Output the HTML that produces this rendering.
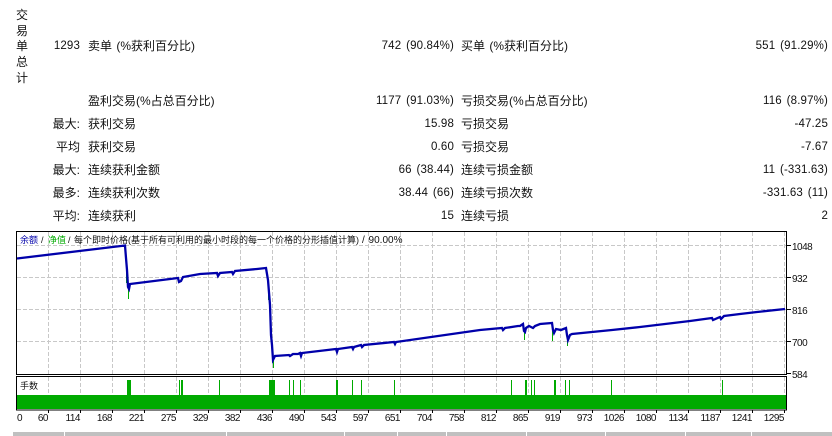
<!DOCTYPE html>
<html><head><meta charset="utf-8">
<style>
html,body{margin:0;padding:0;background:#fff;width:832px;height:436px;overflow:hidden}
body{position:relative;font:12px/16px "Liberation Sans","Noto Sans CJK SC",sans-serif;color:#111}
.t{position:absolute;white-space:nowrap;word-spacing:1px}
.r{text-align:right;font-size:11.5px;letter-spacing:.15px;word-spacing:1.5px}
.k{font-size:12px;letter-spacing:0;word-spacing:0}
svg{position:absolute;left:0;top:0}
svg text{font-family:"Liberation Sans","Noto Sans CJK SC",sans-serif;fill:#111}
.a{font-size:10px;letter-spacing:-.5px}
.b{position:absolute;top:432px;height:4px;background:#c0c0c0}
</style></head><body>
<div class="t" style="left:16px;top:7px">交</div>
<div class="t" style="left:16px;top:23px">易</div>
<div class="t" style="left:16px;top:38px">单</div>
<div class="t" style="left:16px;top:54px">总</div>
<div class="t" style="left:16px;top:70px">计</div>

<div class="t r" style="right:752px;top:38px">1293</div>
<div class="t" style="left:88px;top:38px">卖单 (%获利百分比)</div>
<div class="t r" style="right:378px;top:38px">742 (90.84%)</div>
<div class="t" style="left:461px;top:38px">买单 (%获利百分比)</div>
<div class="t r" style="right:4px;top:38px">551 (91.29%)</div>

<div class="t" style="left:88px;top:93px">盈利交易(%占总百分比)</div>
<div class="t r" style="right:378px;top:93px">1177 (91.03%)</div>
<div class="t" style="left:461px;top:93px">亏损交易(%占总百分比)</div>
<div class="t r" style="right:4px;top:93px">116 (8.97%)</div>

<div class="t r k" style="right:752px;top:116px">最大:</div>
<div class="t" style="left:88px;top:116px">获利交易</div>
<div class="t r" style="right:378px;top:116px">15.98</div>
<div class="t" style="left:461px;top:116px">亏损交易</div>
<div class="t r" style="right:4px;top:116px">-47.25</div>

<div class="t r k" style="right:752px;top:139px">平均</div>
<div class="t" style="left:88px;top:139px">获利交易</div>
<div class="t r" style="right:378px;top:139px">0.60</div>
<div class="t" style="left:461px;top:139px">亏损交易</div>
<div class="t r" style="right:4px;top:139px">-7.67</div>

<div class="t r k" style="right:752px;top:162px">最大:</div>
<div class="t" style="left:88px;top:162px">连续获利金额</div>
<div class="t r" style="right:378px;top:162px">66 (38.44)</div>
<div class="t" style="left:461px;top:162px">连续亏损金额</div>
<div class="t r" style="right:4px;top:162px">11 (-331.63)</div>

<div class="t r k" style="right:752px;top:185px">最多:</div>
<div class="t" style="left:88px;top:185px">连续获利次数</div>
<div class="t r" style="right:378px;top:185px">38.44 (66)</div>
<div class="t" style="left:461px;top:185px">连续亏损次数</div>
<div class="t r" style="right:4px;top:185px">-331.63 (11)</div>

<div class="t r k" style="right:752px;top:208px">平均:</div>
<div class="t" style="left:88px;top:208px">连续获利</div>
<div class="t r" style="right:378px;top:208px">15</div>
<div class="t" style="left:461px;top:208px">连续亏损</div>
<div class="t r" style="right:4px;top:208px">2</div>

<svg width="832" height="436" viewBox="0 0 832 436" shape-rendering="crispEdges">
<g stroke="#c8c8c8" stroke-dasharray="4 2" fill="none">
<path d="M17 245.5H787M17 277.5H787M17 309.5H787M17 341.5H787"/>
<path d="M48.5 232V374M80.5 232V374M112.5 232V374M144.5 232V374M176.5 232V374M208.5 232V374M240.5 232V374M272.5 232V374M304.5 232V374M336.5 232V374M368.5 232V374M400.5 232V374M432.5 232V374M464.5 232V374M496.5 232V374M528.5 232V374M560.5 232V374M592.5 232V374M624.5 232V374M656.5 232V374M688.5 232V374M720.5 232V374M752.5 232V374M784.5 232V374"/>
<path d="M48.5 377V395M80.5 377V395M112.5 377V395M144.5 377V395M176.5 377V395M208.5 377V395M240.5 377V395M272.5 377V395M304.5 377V395M336.5 377V395M368.5 377V395M400.5 377V395M432.5 377V395M464.5 377V395M496.5 377V395M528.5 377V395M560.5 377V395M592.5 377V395M624.5 377V395M656.5 377V395M688.5 377V395M720.5 377V395M752.5 377V395M784.5 377V395"/>
</g>
<g fill="#00aa00">
<rect x="17" y="395" width="769" height="14"/>
<rect x="127" y="380" width="4" height="15"/><rect x="179" y="380" width="1" height="15"/><rect x="181" y="380" width="2" height="15"/><rect x="219" y="380" width="1" height="15"/><rect x="269" y="380" width="6" height="15"/><rect x="289" y="380" width="1" height="15"/><rect x="293" y="380" width="1" height="15"/><rect x="300" y="380" width="1" height="15"/><rect x="336" y="380" width="2" height="15"/><rect x="352" y="380" width="1" height="15"/><rect x="361" y="380" width="1" height="15"/><rect x="394" y="380" width="1" height="15"/><rect x="511" y="380" width="1" height="15"/><rect x="525" y="380" width="2" height="15"/><rect x="531" y="380" width="1" height="15"/><rect x="534" y="380" width="1" height="15"/><rect x="554" y="380" width="2" height="15"/><rect x="565" y="380" width="1" height="15"/><rect x="569" y="380" width="1" height="15"/><rect x="611" y="380" width="1" height="15"/><rect x="722" y="380" width="1" height="15"/>
<rect x="126" y="271" width="1" height="12"/><rect x="128" y="285" width="1" height="14"/><rect x="268" y="291" width="2" height="9"/><rect x="273" y="358" width="1" height="10"/><rect x="524" y="331" width="1" height="9"/><rect x="552" y="331" width="1" height="10"/><rect x="567" y="340" width="1" height="6"/>
</g>
<g shape-rendering="auto">
<polyline fill="none" stroke="#0000aa" stroke-width="2.3" stroke-linejoin="miter" points="17,258.5 125,245.5 126,258 127,270 128,287 129,289 130,284 178,278 179,282 181,281 183,277 200,274 217,273 218,276 220,273 232,272 233,274 235,271 257,269 266,268 268,280 270,305 271,335 272,345 273,360 275,356 289,355 290,356 293,354 298,354 300,353 301,356 302,353 336,349 337,352 338,349 352,347 353,349 354,347 361,345 362,347 364,345 394,342 395,344 396,342 480,330 502,328 503,330 505,328 518,326 520,326 523,324 524,331 525,332 526,328 529,326 531,327 533,328 535,326 540,324 552,323 553,330 554,333 556,329 561,330 566,328 567,335 568,340 570,335 572,334 612,330 640,327 690,321 712,318 713,320 720,317 721,319 724,316 740,314 757,312 785,309"/>
</g>
<g fill="none" stroke="#000">
<rect x="16.5" y="231.5" width="770" height="143"/>
<rect x="16.5" y="376.5" width="770" height="33.5"/>
<path d="M787 245.5H791M787 277.5H791M787 309.5H791M787 341.5H791M787 373.5H791"/>
<path d="M48.5 410V413M80.5 410V413M112.5 410V413M144.5 410V413M176.5 410V413M208.5 410V413M240.5 410V413M272.5 410V413M304.5 410V413M336.5 410V413M368.5 410V413M400.5 410V413M432.5 410V413M464.5 410V413M496.5 410V413M528.5 410V413M560.5 410V413M592.5 410V413M624.5 410V413M656.5 410V413M688.5 410V413M720.5 410V413M752.5 410V413M784.5 410V413"/>
</g>
<g font-size="9">
<text x="20" y="243" style="fill:#0000aa">余额</text>
<text x="41" y="243">/</text>
<text x="48" y="243" style="fill:#00aa00">净值</text>
<text x="68" y="243">/</text>
<text x="74" y="243">每个即时价格(基于所有可利用的最小时段的每一个价格的分形插值计算)</text>
<text x="362" y="243" style="font-size:10px;word-spacing:1px">/ 90.00%</text>
<text x="20" y="389">手数</text>
</g>
<g class="a">
<text x="792" y="250">1048</text><text x="792" y="282">932</text><text x="792" y="314">816</text><text x="792" y="346">700</text><text x="792" y="378">584</text>
</g>
<g class="a" text-anchor="end">
<text x="22" y="421">0</text><text x="48" y="421">60</text><text x="80" y="421">114</text><text x="112" y="421">168</text><text x="144" y="421">221</text><text x="176" y="421">275</text><text x="208" y="421">329</text><text x="240" y="421">382</text><text x="272" y="421">436</text><text x="304" y="421">490</text><text x="336" y="421">543</text><text x="368" y="421">597</text><text x="400" y="421">651</text><text x="432" y="421">704</text><text x="464" y="421">758</text><text x="496" y="421">812</text><text x="528" y="421">865</text><text x="560" y="421">919</text><text x="592" y="421">973</text><text x="624" y="421">1026</text><text x="656" y="421">1080</text><text x="688" y="421">1134</text><text x="720" y="421">1187</text><text x="752" y="421">1241</text><text x="784" y="421">1295</text>
</g>
</svg>
<div class="b" style="left:13px;width:51px"></div>
<div class="b" style="left:65px;width:161px"></div>
<div class="b" style="left:227px;width:117px"></div>
<div class="b" style="left:345px;width:52px"></div>
<div class="b" style="left:398px;width:48px"></div>
<div class="b" style="left:447px;width:79px"></div>
<div class="b" style="left:527px;width:78px"></div>
<div class="b" style="left:606px;width:79px"></div>
<div class="b" style="left:686px;width:65px"></div>
<div class="b" style="left:752px;width:80px"></div>
</body></html>
